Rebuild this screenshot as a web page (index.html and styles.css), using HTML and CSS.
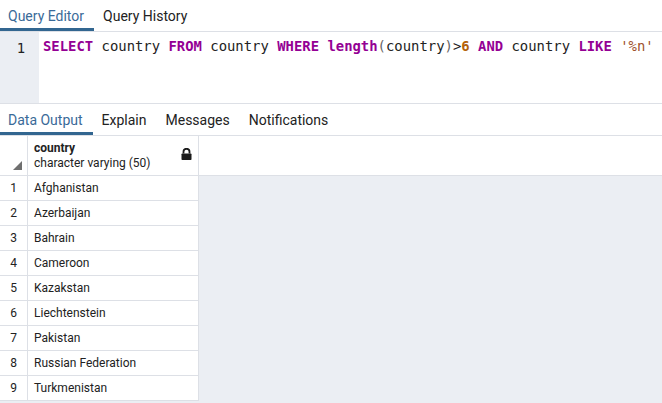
FILE: index.html
```html
<!DOCTYPE html>
<html>
<head>
<meta charset="utf-8">
<link rel="stylesheet" href="styles.css">
</head>
<body>
<div class="tabs">
  <div class="tab active">Query Editor</div>
  <div class="tab">Query History</div>
</div>
<div class="editor">
  <div class="gutter"><span class="ln">1</span></div>
  <div class="code"><span class="kw">SELECT</span> country <span class="kw">FROM</span> country <span class="kw">WHERE</span> <span class="kw">length</span><span class="br">(</span>country<span class="br">)</span>&gt;<span class="nm">6</span> <span class="kw">AND</span> country <span class="kw">LIKE</span> <span class="st">'%n'</span></div>
</div>
<div class="tabs">
  <div class="tab active">Data Output</div>
  <div class="tab">Explain</div>
  <div class="tab">Messages</div>
  <div class="tab">Notifications</div>
</div>
<div class="grid">
  <div class="grid-head">
    <div class="num hnum"><svg width="9" height="9" viewBox="0 0 9 9"><polygon points="9,0 9,9 0,9" fill="#6f6f6f"/></svg></div>
    <div class="col hcol">
      <div class="hname">
        <div class="cname">country</div>
        <div class="ctype">character varying (50)</div>
      </div>
      <svg class="lock" width="11" height="12" viewBox="0 0 11 12"><path d="M2.5 5.5V3.8a3 3 0 0 1 6 0V5.5" fill="none" stroke="#1a1a1a" stroke-width="1.8"/><rect x="0.5" y="5.5" width="10" height="6.5" rx="0.8" fill="#1a1a1a"/></svg>
    </div>
  </div>
  <div class="row"><div class="num">1</div><div class="col">Afghanistan</div></div>
  <div class="row"><div class="num">2</div><div class="col">Azerbaijan</div></div>
  <div class="row"><div class="num">3</div><div class="col">Bahrain</div></div>
  <div class="row"><div class="num">4</div><div class="col">Cameroon</div></div>
  <div class="row"><div class="num">5</div><div class="col">Kazakstan</div></div>
  <div class="row"><div class="num">6</div><div class="col">Liechtenstein</div></div>
  <div class="row"><div class="num">7</div><div class="col">Pakistan</div></div>
  <div class="row"><div class="num">8</div><div class="col">Russian Federation</div></div>
  <div class="row"><div class="num">9</div><div class="col">Turkmenistan</div></div>
</div>
</body>
</html>
```
FILE: styles.css
```css
* { box-sizing: border-box; }
html, body { margin: 0; height: 100%; }
body {
  font-family: Roboto, "Liberation Sans", sans-serif;
  color: #222;
  background: #fff;
  overflow: hidden;
}
.tabs {
  display: flex;
  height: 32px;
  border-bottom: 1px solid #dde0e6;
}
.tab {
  padding: 2px 10px 0 9px;
  font-size: 14px;
  line-height: 28px;
  height: 31px;
  border-bottom: 3px solid transparent;
  color: #222;
}
.tab.active {
  border-bottom-color: #326690;
  color: #3a6a98;
  padding: 2px 10px 0 8px;
}
.editor {
  display: flex;
  height: 72px;
  border-bottom: 1px solid #dde0e6;
}
.gutter {
  width: 39px;
  background: #ebeef3;
  text-align: right;
  padding: 6px 14px 0 0;
}
.ln, .code {
  font-family: "DejaVu Sans Mono", monospace;
  font-size: 13.9px;
  line-height: 17px;
}
.ln { color: #222; }
.code {
  padding: 6px 0 0 4px;
  white-space: pre;
  color: #222;
}
.kw { color: #940094; font-weight: bold; }
.br { color: #666; }
.nm { color: #b4620a; font-weight: bold; }
.st { color: #a0522d; }
.grid {
  background: #ebeef3;
  height: calc(100% - 136px);
}
.grid-head {
  display: flex;
  height: 40px;
  background: #fff;
  border-bottom: 1px solid #dde0e6;
}
.num {
  width: 28px;
  flex: none;
  border-right: 1px solid #dde0e6;
  font-size: 12px;
  text-align: center;
  line-height: 24px;
}
.col {
  width: 171px;
  flex: none;
  border-right: 1px solid #dde0e6;
  font-size: 12px;
  line-height: 24px;
  padding-left: 6px;
}
.hnum {
  display: flex;
  align-items: flex-end;
  justify-content: flex-end;
  padding: 0 5px 5px 0;
}
.hcol {
  display: flex;
  align-items: center;
  justify-content: space-between;
  padding-right: 6px;
}
.hname { line-height: 15px; padding-top: 1px; }
.cname { font-weight: bold; }
.lock { margin-top: -4px; }
.row {
  display: flex;
  width: 199px;
  height: 25px;
  background: #fff;
  border-bottom: 1px solid #dde0e6;
}
```
